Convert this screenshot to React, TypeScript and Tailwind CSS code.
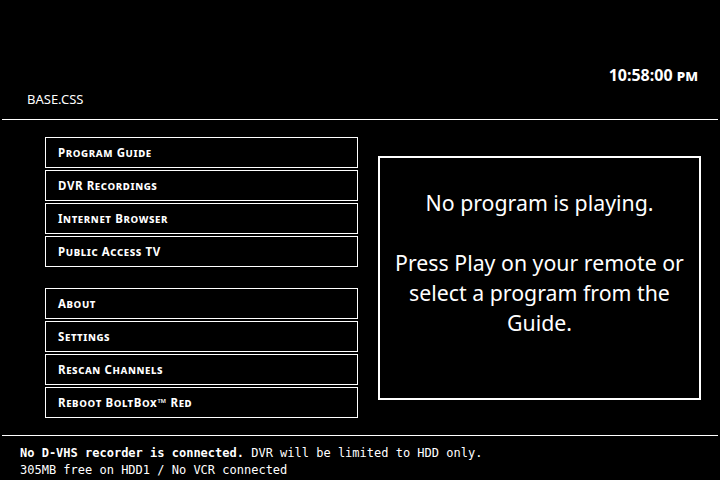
import React from "react";

const group1 = ["Program Guide", "DVR Recordings", "Internet Browser", "Public Access TV"];
const group2 = ["About", "Settings", "Rescan Channels", "Reboot BoltBox™ Red"];

function MenuButton({ label }: { label: string }) {
  return (
    <div className="h-[31px] w-[313px] border border-white flex items-center pl-[12px] pt-[1px] text-[11.5px] font-bold tracking-[0.6px] [font-variant:small-caps] leading-none">
      {label}
    </div>
  );
}

export default function App() {
  return (
    <div className="w-[720px] h-[480px] bg-black text-white font-['Noto_Sans',sans-serif] overflow-hidden flex flex-col">
      <div className="pt-[63px] pr-[22px] text-right text-[16px] font-bold leading-[24px]">
        10:58:00 <span className="[font-variant:small-caps]">pm</span>
      </div>
      <div className="pl-[27px] mt-[3px] text-[13px] leading-[18px]">BASE.CSS</div>
      <div className="mx-[2px] mt-[11px] h-px bg-white" />
      <div className="flex h-[315px]">
        <div className="pl-[45px] pt-[17px] flex flex-col gap-[21px]">
          <div className="flex flex-col gap-[2px]">
            {group1.map((l) => (
              <MenuButton key={l} label={l} />
            ))}
          </div>
          <div className="flex flex-col gap-[2px]">
            {group2.map((l) => (
              <MenuButton key={l} label={l} />
            ))}
          </div>
        </div>
        <div className="ml-[20px] mt-[36px] w-[323px] h-[244px] border-2 border-white pt-[30px] px-[8px] text-center text-[21.3px] leading-[30px]">
          <p>No program is playing.</p>
          <p className="mt-[30px]">Press Play on your remote or select a program from the Guide.</p>
        </div>
      </div>
      <div className="mx-[2px] h-px bg-white" />
      <div className="pl-[20px] pt-[9px] font-['DejaVu_Sans_Mono',monospace] text-[12px] leading-[17px]">
        <div>
          <span className="font-bold">No D-VHS recorder is connected.</span> DVR will be limited to HDD only.
        </div>
        <div>305MB free on HDD1 / No VCR connected</div>
      </div>
    </div>
  );
}
